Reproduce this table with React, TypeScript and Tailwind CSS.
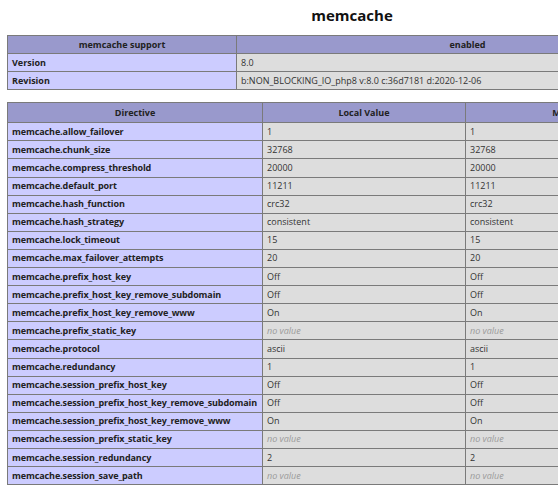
import React from 'react';

const rows: [string, string][] = [
  ['memcache.allow_failover', '1'],
  ['memcache.chunk_size', '32768'],
  ['memcache.compress_threshold', '20000'],
  ['memcache.default_port', '11211'],
  ['memcache.hash_function', 'crc32'],
  ['memcache.hash_strategy', 'consistent'],
  ['memcache.lock_timeout', '15'],
  ['memcache.max_failover_attempts', '20'],
  ['memcache.prefix_host_key', 'Off'],
  ['memcache.prefix_host_key_remove_subdomain', 'Off'],
  ['memcache.prefix_host_key_remove_www', 'On'],
  ['memcache.prefix_static_key', ''],
  ['memcache.protocol', 'ascii'],
  ['memcache.redundancy', '1'],
  ['memcache.session_prefix_host_key', 'Off'],
  ['memcache.session_prefix_host_key_remove_subdomain', 'Off'],
  ['memcache.session_prefix_host_key_remove_www', 'On'],
  ['memcache.session_prefix_static_key', ''],
  ['memcache.session_redundancy', '2'],
  ['memcache.session_save_path', ''],
];

const cell = 'border border-[#7a7a7a] h-[18.1px] py-0 px-[4px] leading-[12px] align-middle';

function Val({ v }: { v: string }) {
  return (
    <td className={`${cell} bg-[#dddddd] text-[#333]`}>
      {v === '' ? <i className="text-[#9a9a9a]">no value</i> : v}
    </td>
  );
}

export default function App() {
  return (
    <div className="w-[558px] h-[495px] overflow-hidden bg-white">
      <div
        className="w-[704px] text-[9px] text-[#222]"
        style={{ fontFamily: '"Open Sans", "Noto Sans", sans-serif' }}
      >
        <h2 className="h-[35px] pt-[5px] text-center text-[15px] font-bold leading-[20px] text-[#111]">memcache</h2>

        <table className="ml-[7px] w-[692px] border-collapse text-left">
          <tbody>
            <tr className="bg-[#9999cc] font-bold text-[#222]">
              <th className={`${cell} w-[229px] text-center`}>memcache support</th>
              <th className={`${cell} text-center`}>enabled</th>
            </tr>
            <tr>
              <td className={`${cell} bg-[#ccccff] font-bold`}>Version</td>
              <Val v="8.0" />
            </tr>
            <tr>
              <td className={`${cell} bg-[#ccccff] font-bold`}>Revision</td>
              <Val v="b:NON_BLOCKING_IO_php8 v:8.0 c:36d7181 d:2020-12-06" />
            </tr>
          </tbody>
        </table>

        <table className="ml-[7px] mt-[12px] w-[692px] table-fixed border-collapse text-left">
          <tbody>
            <tr className="bg-[#9999cc] font-bold text-[#222]">
              <th className={`${cell} h-[20px] w-[255px] text-center`}>Directive</th>
              <th className={`${cell} h-[20px] w-[203px] text-center`}>Local Value</th>
              <th className={`${cell} h-[20px] text-center`}>Master Value</th>
            </tr>
            {rows.map(([k, v]) => (
              <tr key={k}>
                <td className={`${cell} whitespace-nowrap bg-[#ccccff] font-bold tracking-[-0.1px]`}>{k}</td>
                <Val v={v} />
                <Val v={v} />
              </tr>
            ))}
          </tbody>
        </table>
      </div>
    </div>
  );
}
